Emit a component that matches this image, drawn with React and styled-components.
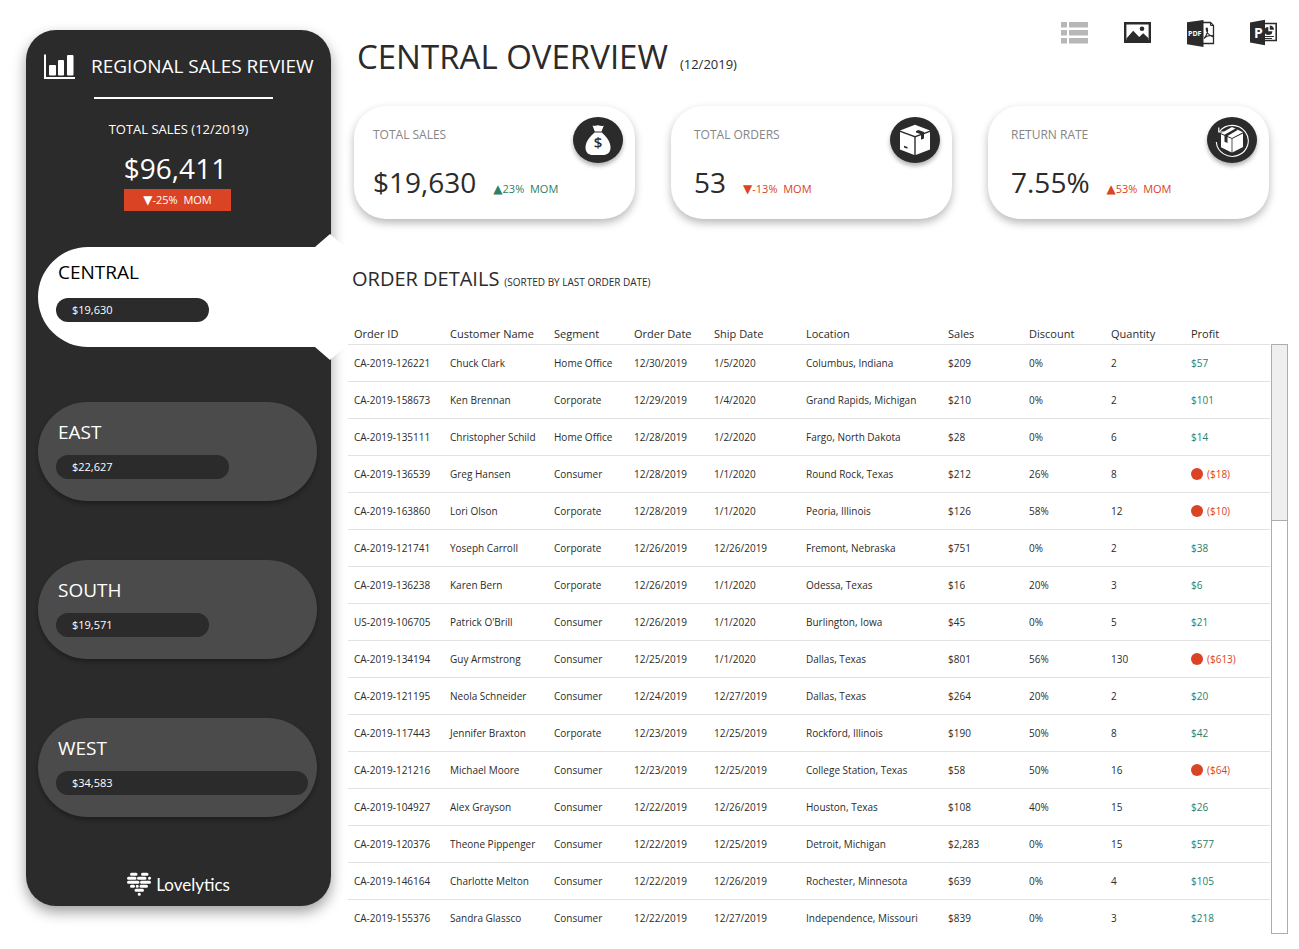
import React from "react";
import styled, { createGlobalStyle } from "styled-components";

const ink = "#2b2b2b";
const red = "#db4325";
const green = "#2a8068";

const Global = createGlobalStyle`
  *, *::before, *::after { box-sizing: border-box; }
  body { margin: 0; background: #fff; }
  body, button, table {
    font-family: "Trebuchet MS", "Open Sans", "Noto Sans", sans-serif;
    color: ${ink};
  }
  h1, h2, p { margin: 0; font-weight: 400; }
  button { border: 0; padding: 0; background: none; cursor: pointer; text-align: left; }
`;

const Page = styled.div`
  display: flex;
  align-items: flex-start;
  padding: 0 11px 15px 26px;
`;

/* ---------- sidebar ---------- */

const Sidebar = styled.aside`
  flex: 0 0 305px;
  display: flex;
  flex-direction: column;
  align-items: center;
  margin-top: 30px;
  padding: 24px 0 10px;
  border-radius: 30px;
  background: #2b2b2b;
  color: #fff;
  box-shadow: 0 6px 14px rgba(0, 0, 0, 0.38);
`;

const Brand = styled.div`
  display: flex;
  align-items: center;
  align-self: stretch;
  gap: 15px;
  height: 26px;
  padding-left: 18px;
`;

const BrandTitle = styled.h2`
  padding-bottom: 2px;
  font-size: 19px;
  line-height: 24px;
  white-space: nowrap;
`;

const Rule = styled.hr`
  width: 179px;
  height: 2px;
  margin: 17px 0 20px 10px;
  border: 0;
  background: #fff;
`;

const TotalLabel = styled.p`
  font-size: 13px;
  line-height: 20px;
`;

const TotalValue = styled.p`
  margin: 11px 6px 0 0;
  font-size: 28px;
  line-height: 36px;
`;

const TotalBadge = styled.p`
  width: 107px;
  margin: 3px 2px 0 0;
  background: ${red};
  font-size: 11px;
  line-height: 22px;
  text-align: center;
  white-space: pre;
`;

const Arrow = styled.span`
  font-family: "DejaVu Sans", sans-serif;
  font-size: 12px;
  line-height: 1;
`;

const Regions = styled.nav`
  display: flex;
  flex-direction: column;
  align-self: stretch;
  gap: 59px;
  margin-top: 33px;
  padding: 0 14px 0 12px;
`;

const Region = styled.button`
  display: flex;
  flex-direction: column;
  gap: 9px;
  height: 99px;
  padding: 17px 9px 0 18px;
  border-radius: 50px;
  background: #4b4b4b;
  color: #fff;
  box-shadow: 0 3px 4px rgba(0, 0, 0, 0.3);
`;

const ActiveRegion = styled(Region)`
  position: relative;
  height: 100px;
  margin: 3px -28px -4px 0;
  padding: 12px 37px 0 18px;
  gap: 12px;
  border-radius: 50px 0 0 50px;
  background: #fff;
  color: #000;
  box-shadow: none;

  &::before,
  &::after {
    content: "";
    position: absolute;
    right: 0;
    width: 30px;
    height: 13px;
    background: #fff;
  }
  &::before { bottom: 100%; clip-path: polygon(0 100%, 50% 0, 100% 100%); }
  &::after { top: 100%; clip-path: polygon(0 0, 100% 0, 50% 100%); }
`;

const RegionName = styled.span`
  padding-left: 2px;
  font-size: 19px;
  line-height: 27px;
`;

const Bar = styled.span`
  display: block;
  padding-left: 16px;
  border-radius: 12px;
  background: #2b2b2b;
  color: #fff;
  font-size: 11px;
  line-height: 24px;
`;

const Logo = styled.div`
  display: flex;
  align-items: center;
  gap: 5px;
  height: 24px;
  margin-top: 55px;
  font-family: Lato, sans-serif;
  font-size: 17px;
  font-weight: 400;
`;

/* ---------- main column ---------- */

const Main = styled.main`
  flex: 1;
  min-width: 0;
  padding: 19px 0 0 17px;
`;

const Header = styled.header`
  display: flex;
  justify-content: space-between;
  align-items: flex-start;
  padding: 0 10px 0 9px;
`;

const Title = styled.h1`
  margin-top: 14px;
  font-size: 33px;
  line-height: 48px;
`;

const Note = styled.span`
  margin-left: ${(p) => p.$gap}px;
  font-size: ${(p) => p.$size}px;
  line-height: 1;
`;

const Tools = styled.div`
  display: flex;
  gap: 35px;
`;

const Tool = styled.button`
  width: 28px;
  height: 28px;
  svg { display: block; }
`;

const Cards = styled.section`
  display: grid;
  grid-template-columns: repeat(3, 1fr);
  gap: 36px;
  margin: 25px 19px 0 6px;
`;

const Card = styled.article`
  display: flex;
  justify-content: space-between;
  align-items: flex-start;
  height: 113px;
  padding: 11px 12px 0 ${(p) => p.$inset}px;
  border-radius: 32px;
  background: #fff;
  box-shadow: 0 4px 8px rgba(0, 0, 0, 0.28);
`;

const CardLabel = styled.p`
  margin-top: 9px;
  font-size: 12px;
  line-height: 18px;
  color: #868686;
`;

const CardFigures = styled.div`
  display: flex;
  align-items: baseline;
  gap: 17px;
  margin-top: 20px;
  line-height: 36px;
`;

const CardValue = styled.span`
  font-size: 28px;
`;

const Change = styled.span`
  font-size: 11px;
  white-space: pre;
  color: ${(p) => (p.$bad ? red : green)};
`;

const CardIcon = styled.span`
  display: flex;
  align-items: center;
  justify-content: center;
  width: 50px;
  height: 46px;
  border-radius: 50%;
  background: #2b2b2b;
  box-shadow: 0 3px 4px rgba(0, 0, 0, 0.3);
`;

const SectionTitle = styled.h2`
  margin: 46px 0 0 4px;
  font-size: 20px;
  line-height: 28px;
`;

const TableArea = styled.section`
  display: flex;
  align-items: flex-start;
  gap: 1px;
  margin-top: 31px;
`;

const TableView = styled.div`
  flex: 1;
  min-width: 0;
  height: 610px;
  overflow: hidden;
`;

const Table = styled.table`
  width: 100%;
  table-layout: fixed;
  border-collapse: separate;
  border-spacing: 0;
`;

const Th = styled.th`
  height: 21px;
  padding: 0 0 0 6px;
  border-bottom: 1px solid #e2e2e2;
  font-size: 11px;
  font-weight: 400;
  line-height: 20px;
  text-align: left;
  white-space: nowrap;
`;

const Td = styled.td`
  height: 37px;
  padding: 0 0 0 6px;
  border-bottom: 1px solid #e2e2e2;
  font-size: 10px;
  line-height: 16px;
  white-space: nowrap;
`;

const Profit = styled.span`
  display: flex;
  align-items: center;
  gap: 4px;
  color: ${(p) => (p.$loss ? red : green)};
`;

const Dot = styled.i`
  width: 12px;
  height: 12px;
  border-radius: 50%;
  background: ${red};
`;

const ScrollTrack = styled.div`
  flex: 0 0 17px;
  height: 590px;
  margin-top: 20px;
  border: 1px solid #adadad;
`;

const ScrollThumb = styled.div`
  height: 30%;
  border-bottom: 1px solid #adadad;
  background: #efefef;
`;

/* ---------- drawings ---------- */

const ChartIcon = () => (
  <svg width="32" height="26" viewBox="0 0 32 26" fill="#fff" aria-hidden="true">
    <path d="M0 0.500h2v22.500h29v2H0z" />
    <rect x="5" y="11" width="7" height="10.500" rx="1" />
    <rect x="14" y="6" width="6" height="15.500" rx="1" />
    <rect x="23" y="1" width="6.500" height="20.500" rx="1" />
  </svg>
);

const HeartLogo = () => (
  <svg width="24" height="24" viewBox="0 0 24 24" stroke="#fff" strokeWidth="3" strokeLinecap="round" aria-hidden="true">
    <path d="M4.500 2.200h4.500M15.500 2.200h4.500M1.500 6.200h6.500M11.500 6.200h6.500M22.500 6.200h.1M1.500 10.200h9.500M14.500 10.200h8M4.500 14.200h2M10.200 14.200h.1M14 14.200h5.500M9 18.200h6.500M12.200 22.200h.1" />
  </svg>
);

const ListIcon = () => (
  <svg width="28" height="28" viewBox="0 0 28 28" fill="#b7b7b7" aria-hidden="true">
    <path d="M0 3h6v5.500H0zM8 3h19v5.500H8zM0 11h6v5.500H0zM8 11h19v5.500H8zM0 19h6v5.500H0zM8 19h19v5.500H8z" />
  </svg>
);

const ImageIcon = () => (
  <svg width="28" height="28" viewBox="0 0 28 28" fill={ink} aria-hidden="true">
    <path fillRule="evenodd" d="M0 3h27v21H0zM2.400 5.400v15.800h22.200V5.400z" />
    <path d="M2.400 19.500L9.200 11.700l6 6.300 4-3.800 5.400 5V22H2.400z" />
    <circle cx="18" cy="9.700" r="2.300" />
  </svg>
);

const PdfIcon = () => (
  <svg width="28" height="28" viewBox="0 0 28 28" aria-hidden="true">
    <path d="M15 3.500h8.500l3 3V24.500H15" fill="none" stroke={ink} strokeWidth="1.300" />
    <path d="M23.500 3.500v3h3" fill="none" stroke={ink} />
    <path d="M17 19.500c2-2 4-6.500 3.500-9.500-.2-1.300-1.400-1.200-1.300 0 .3 3.500 3.300 6.500 6 7.500.8.400 1-.8 0-.9-2.700-.3-6.200.4-8.200 2.900z" fill="none" stroke={ink} strokeWidth="1.200" />
    <path d="M0 3.200L16.500 1v27L0 25.200z" fill={ink} />
    <text x="1" y="17" fontSize="7" fontWeight="700" fill="#fff" fontFamily="Open Sans, sans-serif">PDF</text>
  </svg>
);

const PptIcon = () => (
  <svg width="28" height="28" viewBox="0 0 28 28" aria-hidden="true">
    <path d="M14 4.500h12.200v17H14" fill="none" stroke={ink} strokeWidth="1.600" />
    <path d="M18.300 8a4 4 0 1 0 4.200 4.200h-4.200z" fill={ink} />
    <path d="M19.800 6.500v4.200h4.200a4.200 4.200 0 0 0-4.200-4.200z" fill={ink} />
    <path d="M15 17.500h9M15 19.500h7" stroke={ink} />
    <path d="M0 3.500L15 .8v25.400L0 23.500z" fill={ink} />
    <text x="4" y="19" fontSize="14" fontWeight="700" fill="#fff" fontFamily="Open Sans, sans-serif">P</text>
  </svg>
);

const BagIcon = () => (
  <svg width="28" height="32" viewBox="0 0 28 32" aria-hidden="true">
    <path d="M8.500 1.500c1.800 1 3 .2 5.500-.2 2.500.6 4 1.200 5.800.2L17.500 7.500h-6.700z" fill="#fff" />
    <path d="M10.500 8.500h7.300c4 3.500 8.700 9 8.700 15 0 5.500-3.500 7.500-7.500 7.500H9c-4.500 0-7.500-2.500-7.500-7.500C1.500 17.500 6.500 12 10.500 8.500z" fill="#fff" />
    <text x="14" y="24" fontSize="15" fontWeight="600" textAnchor="middle" fill={ink} fontFamily="Open Sans, sans-serif">$</text>
  </svg>
);

const BoxIcon = () => (
  <svg width="32" height="32" viewBox="0 0 32 32" aria-hidden="true">
    <path d="M1 6.500L16 .8l15 5.700L16 12z" fill="#fff" />
    <path d="M1 8l14.300 5.200V31L1 25.500zM31 8l-14.300 5.200V31L31 25.500z" fill="#fff" />
    <path d="M17 7l2.500-1 5.500 2v6.500l-3 1.200V10.300L17 8.500z" fill={ink} />
    <path d="M5 21.800l3.500 1.200v1.800L5 23.500z" fill={ink} />
  </svg>
);

const ReturnIcon = () => (
  <svg width="36" height="36" viewBox="0 0 36 36" aria-hidden="true">
    <path d="M5.500 9.500A16 15.500 0 1 1 2.300 20" fill="none" stroke="#fff" strokeWidth="1.100" />
    <path d="M4.800 5.500v4.500h5" fill="none" stroke="#fff" strokeWidth="1.200" />
    <path d="M7 11.200L18 5l11 5.200-11 5.800z" fill="#fff" />
    <path d="M7 12.300l10.600 4.500V30.500L7 25.200zM29 11.400l-10.600 5.400v13.700L29 25z" fill="#fff" />
    <path d="M10.500 12.700l11-6.200 2.500 1.200-10.500 6.200v7.200l-3-1.300z" fill={ink} />
  </svg>
);

/* ---------- data ---------- */

const regions = [
  { name: "EAST", sales: "$22,627", share: 173 / 252 },
  { name: "SOUTH", sales: "$19,571", share: 153 / 252 },
  { name: "WEST", sales: "$34,583", share: 1 },
];

const cards = [
  { label: "TOTAL SALES", value: "$19,630", arrow: "▲", change: "23%  MOM", bad: false, inset: 19, Icon: BagIcon },
  { label: "TOTAL ORDERS", value: "53", arrow: "▼", change: "-13%  MOM", bad: true, inset: 23, Icon: BoxIcon },
  { label: "RETURN RATE", value: "7.55%", arrow: "▲", change: "53%  MOM", bad: true, inset: 23, Icon: ReturnIcon },
];

const columns = [
  ["Order ID", 96],
  ["Customer Name", 104],
  ["Segment", 80],
  ["Order Date", 80],
  ["Ship Date", 92],
  ["Location", 142],
  ["Sales", 81],
  ["Discount", 82],
  ["Quantity", 80],
  ["Profit", 85],
];

const orders = [
  ["CA-2019-126221", "Chuck Clark", "Home Office", "12/30/2019", "1/5/2020", "Columbus, Indiana", "$209", "0%", "2", "$57"],
  ["CA-2019-158673", "Ken Brennan", "Corporate", "12/29/2019", "1/4/2020", "Grand Rapids, Michigan", "$210", "0%", "2", "$101"],
  ["CA-2019-135111", "Christopher Schild", "Home Office", "12/28/2019", "1/2/2020", "Fargo, North Dakota", "$28", "0%", "6", "$14"],
  ["CA-2019-136539", "Greg Hansen", "Consumer", "12/28/2019", "1/1/2020", "Round Rock, Texas", "$212", "26%", "8", "($18)"],
  ["CA-2019-163860", "Lori Olson", "Corporate", "12/28/2019", "1/1/2020", "Peoria, Illinois", "$126", "58%", "12", "($10)"],
  ["CA-2019-121741", "Yoseph Carroll", "Corporate", "12/26/2019", "12/26/2019", "Fremont, Nebraska", "$751", "0%", "2", "$38"],
  ["CA-2019-136238", "Karen Bern", "Corporate", "12/26/2019", "1/1/2020", "Odessa, Texas", "$16", "20%", "3", "$6"],
  ["US-2019-106705", "Patrick O'Brill", "Consumer", "12/26/2019", "1/1/2020", "Burlington, Iowa", "$45", "0%", "5", "$21"],
  ["CA-2019-134194", "Guy Armstrong", "Consumer", "12/25/2019", "1/1/2020", "Dallas, Texas", "$801", "56%", "130", "($613)"],
  ["CA-2019-121195", "Neola Schneider", "Consumer", "12/24/2019", "12/27/2019", "Dallas, Texas", "$264", "20%", "2", "$20"],
  ["CA-2019-117443", "Jennifer Braxton", "Corporate", "12/23/2019", "12/25/2019", "Rockford, Illinois", "$190", "50%", "8", "$42"],
  ["CA-2019-121216", "Michael Moore", "Consumer", "12/23/2019", "12/25/2019", "College Station, Texas", "$58", "50%", "16", "($64)"],
  ["CA-2019-104927", "Alex Grayson", "Consumer", "12/22/2019", "12/26/2019", "Houston, Texas", "$108", "40%", "15", "$26"],
  ["CA-2019-120376", "Theone Pippenger", "Consumer", "12/22/2019", "12/25/2019", "Detroit, Michigan", "$2,283", "0%", "15", "$577"],
  ["CA-2019-146164", "Charlotte Melton", "Consumer", "12/22/2019", "12/26/2019", "Rochester, Minnesota", "$639", "0%", "4", "$105"],
  ["CA-2019-155376", "Sandra Glassco", "Consumer", "12/22/2019", "12/27/2019", "Independence, Missouri", "$839", "0%", "3", "$218"],
];

export default function App() {
  return (
    <>
      <Global />
      <Page>
        <Sidebar>
          <Brand>
            <ChartIcon />
            <BrandTitle>REGIONAL SALES REVIEW</BrandTitle>
          </Brand>
          <Rule />
          <TotalLabel>TOTAL SALES (12/2019)</TotalLabel>
          <TotalValue>$96,411</TotalValue>
          <TotalBadge><Arrow>▼</Arrow>{"-25%  MOM"}</TotalBadge>
          <Regions aria-label="Regions">
            <ActiveRegion type="button" aria-current="true">
              <RegionName>CENTRAL</RegionName>
              <Bar style={{ width: `${(153 / 252) * 100}%` }}>$19,630</Bar>
            </ActiveRegion>
            {regions.map((r) => (
              <Region type="button" key={r.name}>
                <RegionName>{r.name}</RegionName>
                <Bar style={{ width: `${r.share * 100}%` }}>{r.sales}</Bar>
              </Region>
            ))}
          </Regions>
          <Logo>
            <HeartLogo />
            Lovelytics
          </Logo>
        </Sidebar>

        <Main>
          <Header>
            <Title>
              CENTRAL OVERVIEW
              <Note $gap={12} $size={13}>(12/2019)</Note>
            </Title>
            <Tools>
              <Tool type="button" aria-label="List view"><ListIcon /></Tool>
              <Tool type="button" aria-label="Download image"><ImageIcon /></Tool>
              <Tool type="button" aria-label="Download PDF"><PdfIcon /></Tool>
              <Tool type="button" aria-label="Download PowerPoint"><PptIcon /></Tool>
            </Tools>
          </Header>

          <Cards>
            {cards.map(({ label, value, arrow, change, bad, inset, Icon }) => (
              <Card key={label} $inset={inset}>
                <div>
                  <CardLabel>{label}</CardLabel>
                  <CardFigures>
                    <CardValue>{value}</CardValue>
                    <Change $bad={bad}><Arrow>{arrow}</Arrow>{change}</Change>
                  </CardFigures>
                </div>
                <CardIcon><Icon /></CardIcon>
              </Card>
            ))}
          </Cards>

          <SectionTitle>
            ORDER DETAILS
            <Note $gap={5} $size={10}>(SORTED BY LAST ORDER DATE)</Note>
          </SectionTitle>

          <TableArea>
            <TableView>
              <Table>
                <colgroup>
                  {columns.map(([name, width]) => (
                    <col key={name} width={width} />
                  ))}
                </colgroup>
                <thead>
                  <tr>
                    {columns.map(([name]) => (
                      <Th key={name} scope="col">{name}</Th>
                    ))}
                  </tr>
                </thead>
                <tbody>
                  {orders.map((row) => (
                    <tr key={row[0]}>
                      {row.slice(0, 9).map((cell, i) => (
                        <Td key={i}>{cell}</Td>
                      ))}
                      <Td>
                        <Profit $loss={row[9].startsWith("(")}>
                          {row[9].startsWith("(") && <Dot />}
                          {row[9]}
                        </Profit>
                      </Td>
                    </tr>
                  ))}
                </tbody>
              </Table>
            </TableView>
            <ScrollTrack>
              <ScrollThumb />
            </ScrollTrack>
          </TableArea>
        </Main>
      </Page>
    </>
  );
}
